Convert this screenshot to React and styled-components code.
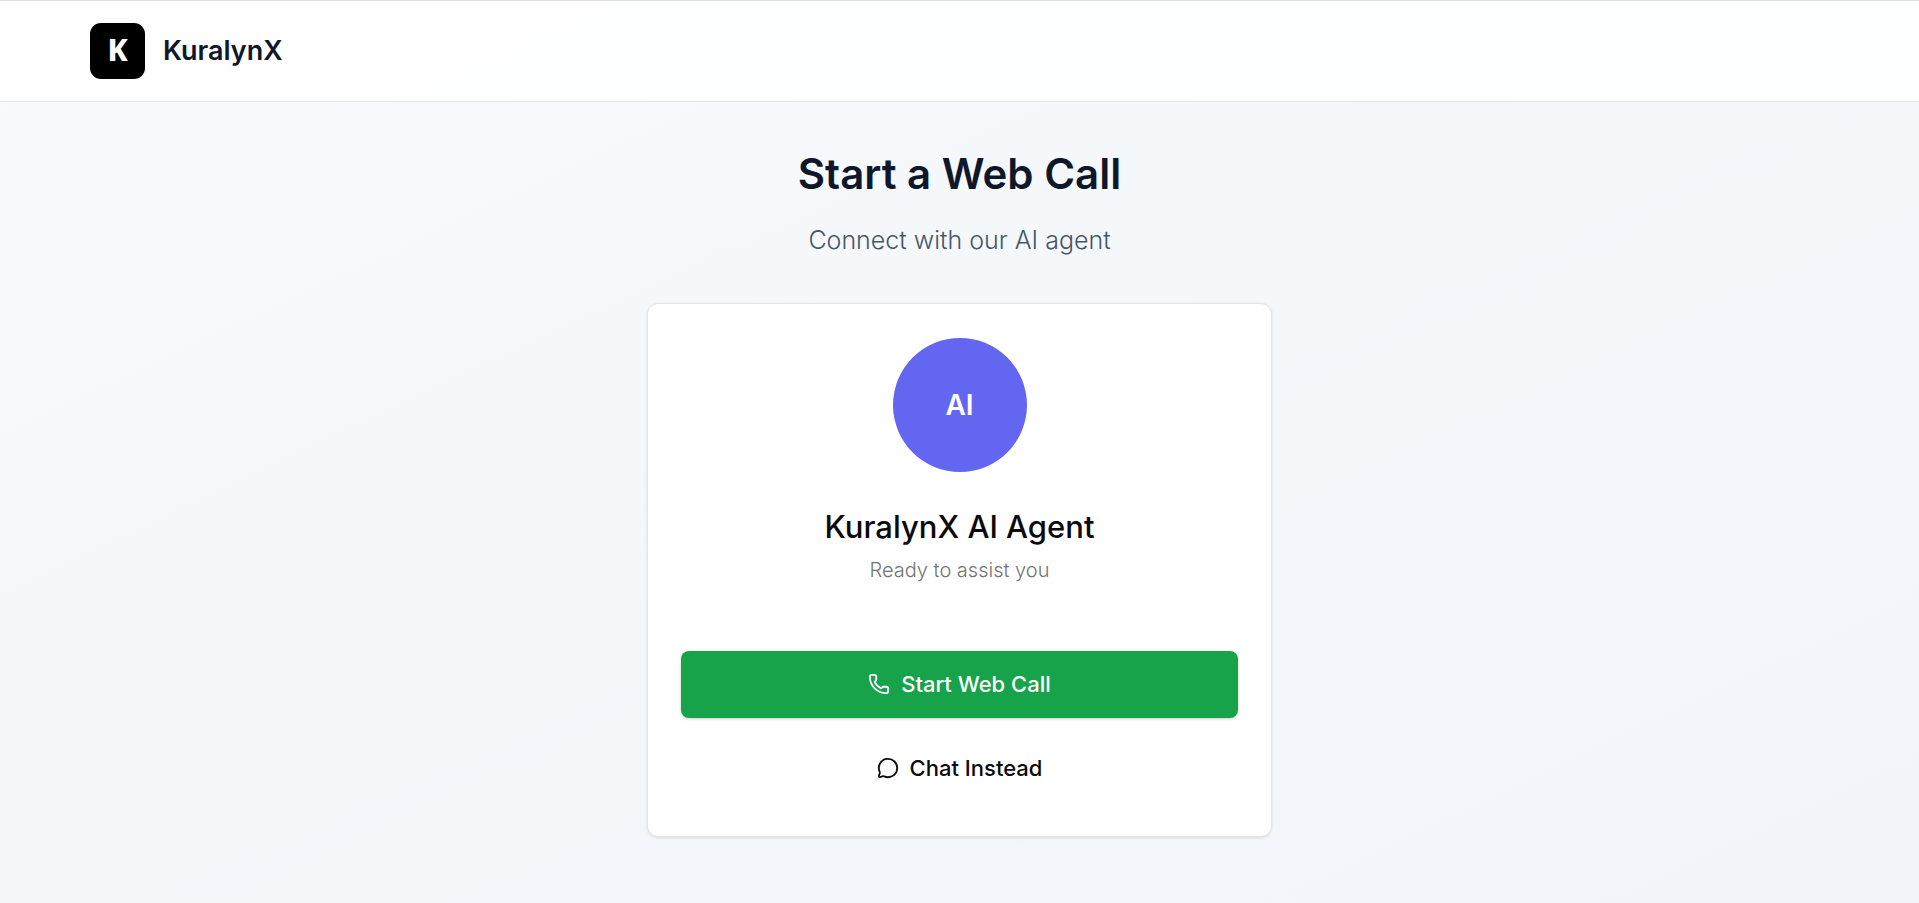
import React from 'react';
import styled, { createGlobalStyle } from 'styled-components';
import { MessageCircle, Phone } from 'lucide-react';

const GlobalStyle = createGlobalStyle`
    *, *::before, *::after {
        box-sizing: border-box;
    }
    body {
        color: #0a0a0a;
        font-family: Inter, "Open Sans", sans-serif;
        margin: 0;
    }
    h1, h2, p {
        margin: 0;
    }
`;

const Page = styled.div`
    background: linear-gradient(to bottom right, #f8fafc, #f1f5f9);
    display: flex;
    flex-direction: column;
    min-height: 100vh;
`;

const Header = styled.header`
    background-color: rgba(255, 255, 255, 0.8);
    border-bottom: 1px solid #e2e4e7;
    border-top: 1px solid #e2e2e2;
    padding: 22px 90px;
`;

const Brand = styled.a`
    align-items: center;
    color: #0f172a;
    display: inline-flex;
    font-size: 27px;
    font-weight: 600;
    gap: 18px;
    line-height: 56px;
    text-decoration: none;
    vertical-align: top;
`;

const Logo = styled.span`
    background-color: #000;
    border-radius: 11px;
    color: #fff;
    font-family: "Noto Sans", sans-serif;
    font-size: 30px;
    font-weight: 800;
    height: 56px;
    line-height: 54px;
    text-align: center;
    width: 55px;
`;

const Main = styled.main`
    align-items: center;
    display: flex;
    flex: 1;
    flex-direction: column;
    padding: 44px 22px;
`;

const Title = styled.h1`
    color: #0f172a;
    font-size: 42px;
    font-weight: 600;
    line-height: 56px;
`;

const Subtitle = styled.p`
    color: #475569;
    font-size: 25px;
    font-weight: 300;
    line-height: 40px;
    margin-top: 18px;
`;

const Card = styled.section`
    align-items: center;
    background-color: #fff;
    border: 1px solid #e5e5e5;
    border-radius: 11px;
    box-shadow: 0 1px 3px rgba(0, 0, 0, 0.1);
    display: flex;
    flex-direction: column;
    margin-top: 43px;
    max-width: 625px;
    padding: 34px 33px;
    width: 100%;
`;

const Avatar = styled.div`
    align-items: center;
    background-color: #6366f1;
    border-radius: 50%;
    color: #fff;
    display: flex;
    font-size: 28px;
    font-weight: 600;
    height: 134px;
    justify-content: center;
    width: 134px;
`;

const AgentName = styled.h2`
    font-size: 31px;
    font-weight: 500;
    line-height: 44px;
    margin-top: 33px;
`;

const AgentStatus = styled.p`
    color: #737373;
    font-size: 20px;
    font-weight: 300;
    line-height: 28px;
    margin-top: 7px;
`;

const Actions = styled.div`
    display: flex;
    flex-direction: column;
    gap: 17px;
    margin-top: 67px;
    width: 100%;
`;

const Button = styled.button`
    align-items: center;
    background-color: ${props => props.$primary ? '#16a34a' : 'transparent'};
    border: 0;
    border-radius: 8px;
    box-shadow: ${props => props.$primary ? '0 1px 3px rgba(0, 0, 0, 0.2)' : 'none'};
    color: ${props => props.$primary ? '#fff' : '#0a0a0a'};
    cursor: pointer;
    display: flex;
    font-family: inherit;
    font-size: 22px;
    font-weight: 500;
    gap: 11px;
    height: 67px;
    justify-content: center;
    padding: 0 22px 2px;
    width: 100%;
`;

export default function App () {
    return (
        <>
            <GlobalStyle />
            <Page>
                <Header>
                    <Brand href='/'>
                        <Logo aria-hidden='true'>K</Logo>
                        KuralynX
                    </Brand>
                </Header>
                <Main>
                    <Title>Start a Web Call</Title>
                    <Subtitle>Connect with our AI agent</Subtitle>
                    <Card>
                        <Avatar>AI</Avatar>
                        <AgentName>KuralynX AI Agent</AgentName>
                        <AgentStatus>Ready to assist you</AgentStatus>
                        <Actions>
                            <Button type='button' $primary>
                                <Phone size={22} strokeWidth={2} />
                                Start Web Call
                            </Button>
                            <Button type='button'>
                                <MessageCircle size={22} strokeWidth={2} />
                                Chat Instead
                            </Button>
                        </Actions>
                    </Card>
                </Main>
            </Page>
        </>
    );
}
